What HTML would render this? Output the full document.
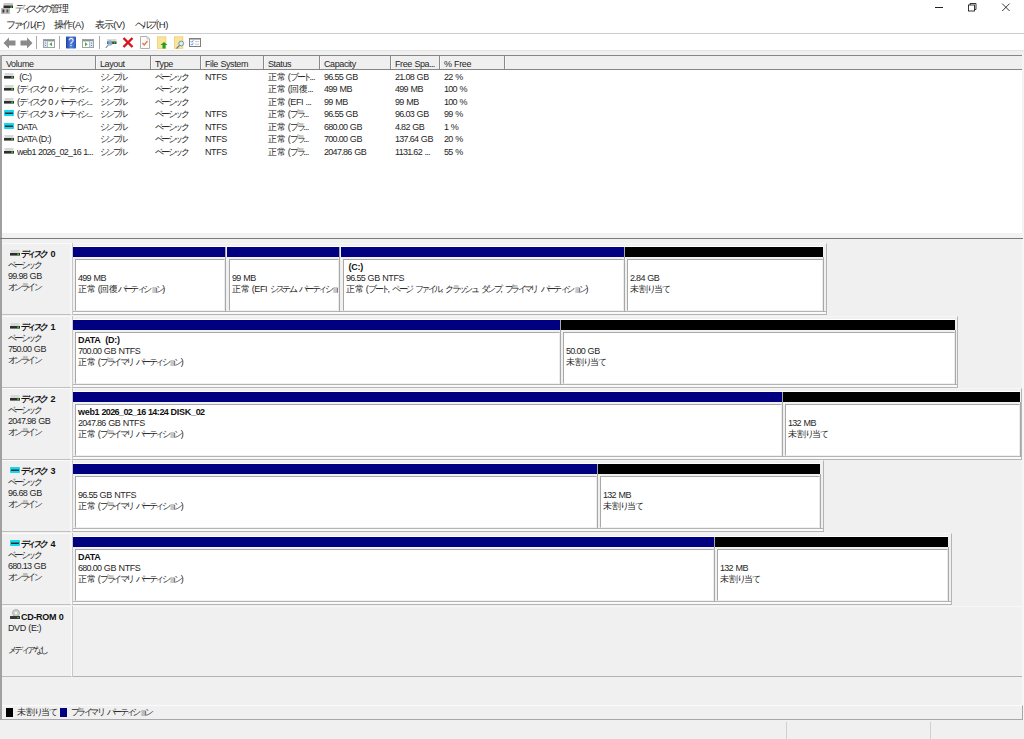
<!DOCTYPE html><html><head><meta charset="utf-8"><style>
*{margin:0;padding:0;box-sizing:border-box}
html,body{width:1024px;height:739px;overflow:hidden;background:#fff;font-family:"Liberation Sans", sans-serif;color:#000}
.a{position:absolute}
.tx{position:absolute;font-size:9px;line-height:11px;white-space:pre;letter-spacing:-0.4px;word-spacing:0.4px;color:#262626}
.b{font-weight:bold;letter-spacing:-0.3px;color:#111}
.j{letter-spacing:-2.6px}
.jl{letter-spacing:-1.4px}
.jl3{letter-spacing:-2px}
.d{letter-spacing:-0.7px}
.k{letter-spacing:-0.4px}
.j3{letter-spacing:-3.3px;margin-right:1px}
.k3{letter-spacing:-0.9px}
</style></head><body><div class="a" style="left:0;top:0;width:1024px;height:34px;background:#fff"></div>
<svg class="a" style="left:0;top:2px" width="14" height="13" viewBox="0 0 14 13">
<rect x="3.5" y="1" width="9.5" height="2.5" fill="#c8c8c8"/><rect x="3.5" y="3.5" width="9.5" height="2.5" fill="#2a2a2a"/><rect x="10.5" y="3.5" width="1.5" height="2.5" fill="#2fa52f"/>
<rect x="1" y="6" width="9" height="6" fill="#bdbdbd"/><rect x="2.5" y="7.5" width="1.8" height="3" fill="#333"/><rect x="6.5" y="7.5" width="1.8" height="3" fill="#555"/></svg>
<div class="tx" style="left:15px;top:3px;font-size:9.5px;line-height:12px"><span class="j3">ディスクの</span><span class="k3">管理</span></div>
<div class="a" style="left:935px;top:7px;width:8px;height:1px;background:#222"></div>
<svg class="a" style="left:967px;top:3px" width="10" height="9" viewBox="0 0 10 9"><rect x="1.5" y="2" width="6" height="6" fill="none" stroke="#222" stroke-width="0.9"/><path d="M3 2V0.5H9V6.5H7.5" fill="none" stroke="#222" stroke-width="0.9"/></svg>
<svg class="a" style="left:1001px;top:3px" width="10" height="9" viewBox="0 0 10 9"><path d="M1.2 0.6L8.6 8M8.6 0.6L1.2 8" stroke="#222" stroke-width="0.9"/></svg>
<div class="tx" style="left:6px;top:19px;font-size:9.5px"><span class="j3">ファイル</span>(F)</div>
<div class="tx" style="left:54px;top:19px;font-size:9.5px"><span class="k3">操作</span>(A)</div>
<div class="tx" style="left:95px;top:19px;font-size:9.5px"><span class="k3">表示</span>(V)</div>
<div class="tx" style="left:135px;top:19px;font-size:9.5px"><span class="j3">ヘルプ</span>(H)</div>
<div class="a" style="left:0;top:33px;width:1024px;height:1px;background:#cdcdcd"></div>
<svg class="a" style="left:3px;top:37px" width="30" height="12" viewBox="0 0 30 12"><path d="M0.5 6L6 0.5V3.5H12.5V8.5H6V11.5Z" fill="#8a8a8a"/><path d="M29.5 6L24 0.5V3.5H17.5V8.5H24V11.5Z" fill="#8a8a8a"/></svg>
<div class="a" style="left:36px;top:36px;width:1px;height:13px;background:#a8a8a8"></div>
<div class="a" style="left:59px;top:36px;width:1px;height:13px;background:#a8a8a8"></div>
<div class="a" style="left:99px;top:36px;width:1px;height:13px;background:#a8a8a8"></div>
<svg class="a" style="left:43px;top:39px" width="12" height="9" viewBox="0 0 12 9"><rect x="0.5" y="0.5" width="11" height="8" fill="#fff" stroke="#9ea3aa"/><rect x="1" y="1" width="10" height="1.4" fill="#8d939b"/><rect x="1" y="2.4" width="3" height="5.6" fill="#dfe5ec"/><rect x="4" y="2.4" width="0.8" height="5.6" fill="#a9aeb5"/><circle cx="2.5" cy="4" r="0.6" fill="#3b7fd8"/><circle cx="2.5" cy="6.5" r="0.6" fill="#3b7fd8"/><path d="M9 3.2L6.3 5.2L9 7.2Z" fill="#2fb82f"/></svg>
<svg class="a" style="left:66px;top:36px" width="10" height="13" viewBox="0 0 10 13"><defs><linearGradient id="hg" x1="0" x2="1" y1="0" y2="0"><stop offset="0" stop-color="#1d3f9a"/><stop offset="0.5" stop-color="#5a87e0"/><stop offset="1" stop-color="#2a52b5"/></linearGradient></defs><rect x="0" y="0.5" width="10" height="12" rx="0.8" fill="url(#hg)"/><text x="5" y="10" font-size="10" font-family="Liberation Sans" fill="#fff" text-anchor="middle">?</text></svg>
<svg class="a" style="left:82px;top:39px" width="12" height="9" viewBox="0 0 12 9"><rect x="0.5" y="0.5" width="11" height="8" fill="#fff" stroke="#9ea3aa"/><rect x="1" y="1" width="10" height="1.4" fill="#8d939b"/><rect x="8" y="2.4" width="3" height="5.6" fill="#dfe5ec"/><rect x="7.2" y="2.4" width="0.8" height="5.6" fill="#a9aeb5"/><circle cx="9.5" cy="4" r="0.6" fill="#3b7fd8"/><circle cx="9.5" cy="6.5" r="0.6" fill="#3b7fd8"/><path d="M3 3.2L5.7 5.2L3 7.2Z" fill="#2fb82f"/></svg>
<svg class="a" style="left:105px;top:38px" width="12" height="11" viewBox="0 0 12 11"><rect x="2" y="1" width="9.5" height="2.5" fill="#d8dadc"/><rect x="2" y="3.5" width="9.5" height="2.5" fill="#333"/><rect x="8.8" y="3.7" width="1.6" height="2" fill="#30c030"/><circle cx="5" cy="5" r="2.3" fill="#9cc3e0" fill-opacity="0.8" stroke="#6e95b5" stroke-width="0.6"/><path d="M3.4 6.8L0.8 9.8" stroke="#7890a5" stroke-width="1.1"/></svg>
<svg class="a" style="left:122px;top:37px" width="12" height="11" viewBox="0 0 12 11"><path d="M1.5 1L10.5 10M10.5 1L1.5 10" stroke="#d6121b" stroke-width="2.4"/></svg>
<svg class="a" style="left:140px;top:36px" width="10" height="13" viewBox="0 0 10 13"><path d="M0.5 0.5H7L9.5 3V12.5H0.5Z" fill="#fbfbfb" stroke="#b0b0b0"/><path d="M7 0.5V3H9.5" fill="none" stroke="#b0b0b0" stroke-width="0.6"/><path d="M2.5 7L4.2 9L7.5 5" stroke="#e8703a" stroke-width="1.2" fill="none"/></svg>
<svg class="a" style="left:157px;top:36px" width="11" height="13" viewBox="0 0 11 13"><rect x="0.3" y="0.8" width="8.6" height="11.6" fill="#fae39a" stroke="#eccb62" stroke-width="0.7"/><path d="M7 6L10.5 9H8.5V12.5H5.5V9H3.5Z" fill="#20a020"/></svg>
<svg class="a" style="left:174px;top:36px" width="11" height="13" viewBox="0 0 11 13"><rect x="0.3" y="0.8" width="8.6" height="11.6" fill="#fae39a" stroke="#eccb62" stroke-width="0.7"/><circle cx="7.2" cy="7.5" r="2.4" fill="#d8eef8" stroke="#5f7f95" stroke-width="0.8"/><path d="M5.5 9.3L2.5 12.5" stroke="#5f7f95" stroke-width="1.2"/></svg>
<svg class="a" style="left:189px;top:38px" width="12" height="9" viewBox="0 0 12 9"><rect x="0.5" y="0.5" width="11" height="8" fill="#fcfcfc" stroke="#808080"/><rect x="1" y="1" width="10" height="0.8" fill="#a8a8a8"/><path d="M1.8 3.3L2.8 4.3L4.3 2.4M1.8 6.1L2.8 7.1L4.3 5.2" stroke="#3d86e0" stroke-width="0.9" fill="none"/><path d="M6 3.6H10M6 6.3H10" stroke="#b5b5b5" stroke-width="0.7"/></svg>
<div class="a" style="left:0;top:50px;width:1024px;height:5px;background:#f0f0f0;border-top:1px solid #e4e4e4"></div>
<div class="a" style="left:0;top:55px;width:1024px;height:184px;background:#fff"></div>
<div class="a" style="left:0;top:55px;width:2px;height:184px;background:#a0a0a0"></div>
<div class="a" style="left:1022px;top:55px;width:2px;height:184px;background:#f4f4f4"></div>
<div class="a" style="left:2px;top:55px;width:1020px;height:15px;background:#efefef;border-top:1px solid #858585;border-bottom:1px solid #858585"></div>
<div class="a" style="left:95px;top:56px;width:1px;height:13px;background:#8a8a8a"></div>
<div class="a" style="left:96px;top:57px;width:1px;height:12px;background:#f8f8f8"></div>
<div class="a" style="left:150px;top:56px;width:1px;height:13px;background:#8a8a8a"></div>
<div class="a" style="left:151px;top:57px;width:1px;height:12px;background:#f8f8f8"></div>
<div class="a" style="left:200px;top:56px;width:1px;height:13px;background:#8a8a8a"></div>
<div class="a" style="left:201px;top:57px;width:1px;height:12px;background:#f8f8f8"></div>
<div class="a" style="left:263px;top:56px;width:1px;height:13px;background:#8a8a8a"></div>
<div class="a" style="left:264px;top:57px;width:1px;height:12px;background:#f8f8f8"></div>
<div class="a" style="left:319px;top:56px;width:1px;height:13px;background:#8a8a8a"></div>
<div class="a" style="left:320px;top:57px;width:1px;height:12px;background:#f8f8f8"></div>
<div class="a" style="left:390px;top:56px;width:1px;height:13px;background:#8a8a8a"></div>
<div class="a" style="left:391px;top:57px;width:1px;height:12px;background:#f8f8f8"></div>
<div class="a" style="left:439px;top:56px;width:1px;height:13px;background:#8a8a8a"></div>
<div class="a" style="left:440px;top:57px;width:1px;height:12px;background:#f8f8f8"></div>
<div class="a" style="left:504px;top:56px;width:1px;height:13px;background:#8a8a8a"></div>
<div class="a" style="left:505px;top:57px;width:1px;height:12px;background:#f8f8f8"></div>
<div class="tx" style="left:6px;top:59px;">Volume</div>
<div class="tx" style="left:100px;top:59px;">Layout</div>
<div class="tx" style="left:155px;top:59px;">Type</div>
<div class="tx" style="left:205px;top:59px;">File System</div>
<div class="tx" style="left:268px;top:59px;">Status</div>
<div class="tx" style="left:324px;top:59px;">Capacity</div>
<div class="tx" style="left:395px;top:59px;">Free Spa<span class="d">...</span></div>
<div class="tx" style="left:444px;top:59px;">% Free</div>
<svg class="a" style="left:4px;top:73px" width="10" height="6" viewBox="0 0 10 6"><rect x="0.5" y="0" width="9" height="3" fill="#d6d8da"/><rect x="0" y="3" width="10" height="2.6" fill="#2e2e2e"/><rect x="7.3" y="3.3" width="1.6" height="2" fill="#3cc03c"/></svg>
<div class="a" style="left:17px;top:72.0px;width:78px;height:12px;overflow:hidden"><div class="tx" style="left:0;top:0;letter-spacing:-0.7px"> (C:)</div></div>
<div class="tx" style="left:100px;top:72.0px;"><span class="j">シンプル</span></div>
<div class="tx" style="left:155px;top:72.0px;"><span class="j">ベーシック</span></div>
<div class="tx" style="left:205px;top:72.0px;">NTFS</div>
<div class="tx" style="left:268px;top:72.0px;"><span class="k">正常</span> (<span class="j">ブート</span><span class="d">...</span></div>
<div class="tx" style="left:324px;top:72.0px;"><span class="d">96.55</span> GB</div>
<div class="tx" style="left:395px;top:72.0px;"><span class="d">21.08</span> GB</div>
<div class="tx" style="left:444px;top:72.0px;"><span class="d">22</span> %</div>
<svg class="a" style="left:4px;top:85px" width="10" height="6" viewBox="0 0 10 6"><rect x="0.5" y="0" width="9" height="3" fill="#d6d8da"/><rect x="0" y="3" width="10" height="2.6" fill="#2e2e2e"/><rect x="7.3" y="3.3" width="1.6" height="2" fill="#3cc03c"/></svg>
<div class="a" style="left:17px;top:84.4px;width:78px;height:12px;overflow:hidden"><div class="tx" style="left:0;top:0;letter-spacing:-0.7px">(<span class="j">ディス</span><span class="jl">ク</span> <span class="d">0</span> <span class="j">パーティシ</span><span class="d">...</span></div></div>
<div class="tx" style="left:100px;top:84.4px;"><span class="j">シンプル</span></div>
<div class="tx" style="left:155px;top:84.4px;"><span class="j">ベーシック</span></div>
<div class="tx" style="left:205px;top:84.4px;"></div>
<div class="tx" style="left:268px;top:84.4px;"><span class="k">正常</span> (<span class="k">回復</span><span class="d">...</span></div>
<div class="tx" style="left:324px;top:84.4px;"><span class="d">499</span> MB</div>
<div class="tx" style="left:395px;top:84.4px;"><span class="d">499</span> MB</div>
<div class="tx" style="left:444px;top:84.4px;"><span class="d">100</span> %</div>
<svg class="a" style="left:4px;top:98px" width="10" height="6" viewBox="0 0 10 6"><rect x="0.5" y="0" width="9" height="3" fill="#d6d8da"/><rect x="0" y="3" width="10" height="2.6" fill="#2e2e2e"/><rect x="7.3" y="3.3" width="1.6" height="2" fill="#3cc03c"/></svg>
<div class="a" style="left:17px;top:96.9px;width:78px;height:12px;overflow:hidden"><div class="tx" style="left:0;top:0;letter-spacing:-0.7px">(<span class="j">ディス</span><span class="jl">ク</span> <span class="d">0</span> <span class="j">パーティシ</span><span class="d">...</span></div></div>
<div class="tx" style="left:100px;top:96.9px;"><span class="j">シンプル</span></div>
<div class="tx" style="left:155px;top:96.9px;"><span class="j">ベーシック</span></div>
<div class="tx" style="left:205px;top:96.9px;"></div>
<div class="tx" style="left:268px;top:96.9px;"><span class="k">正常</span> (EFI <span class="d">...</span></div>
<div class="tx" style="left:324px;top:96.9px;"><span class="d">99</span> MB</div>
<div class="tx" style="left:395px;top:96.9px;"><span class="d">99</span> MB</div>
<div class="tx" style="left:444px;top:96.9px;"><span class="d">100</span> %</div>
<svg class="a" style="left:4px;top:110px" width="10" height="6" viewBox="0 0 10 6"><rect x="0" y="0" width="10" height="6" rx="0.8" fill="#12d8f0"/><rect x="1" y="2.5" width="8" height="1.5" fill="#3a2a2a"/></svg>
<div class="a" style="left:17px;top:109.3px;width:78px;height:12px;overflow:hidden"><div class="tx" style="left:0;top:0;letter-spacing:-0.7px">(<span class="j">ディス</span><span class="jl">ク</span> <span class="d">3</span> <span class="j">パーティシ</span><span class="d">...</span></div></div>
<div class="tx" style="left:100px;top:109.3px;"><span class="j">シンプル</span></div>
<div class="tx" style="left:155px;top:109.3px;"><span class="j">ベーシック</span></div>
<div class="tx" style="left:205px;top:109.3px;">NTFS</div>
<div class="tx" style="left:268px;top:109.3px;"><span class="k">正常</span> (<span class="j">プラ</span><span class="d">...</span></div>
<div class="tx" style="left:324px;top:109.3px;"><span class="d">96.55</span> GB</div>
<div class="tx" style="left:395px;top:109.3px;"><span class="d">96.03</span> GB</div>
<div class="tx" style="left:444px;top:109.3px;"><span class="d">99</span> %</div>
<svg class="a" style="left:4px;top:123px" width="10" height="6" viewBox="0 0 10 6"><rect x="0" y="0" width="10" height="6" rx="0.8" fill="#12d8f0"/><rect x="1" y="2.5" width="8" height="1.5" fill="#3a2a2a"/></svg>
<div class="a" style="left:17px;top:121.7px;width:78px;height:12px;overflow:hidden"><div class="tx" style="left:0;top:0;letter-spacing:-0.7px">DATA</div></div>
<div class="tx" style="left:100px;top:121.7px;"><span class="j">シンプル</span></div>
<div class="tx" style="left:155px;top:121.7px;"><span class="j">ベーシック</span></div>
<div class="tx" style="left:205px;top:121.7px;">NTFS</div>
<div class="tx" style="left:268px;top:121.7px;"><span class="k">正常</span> (<span class="j">プラ</span><span class="d">...</span></div>
<div class="tx" style="left:324px;top:121.7px;"><span class="d">680.00</span> GB</div>
<div class="tx" style="left:395px;top:121.7px;"><span class="d">4.82</span> GB</div>
<div class="tx" style="left:444px;top:121.7px;"><span class="d">1</span> %</div>
<svg class="a" style="left:4px;top:135px" width="10" height="6" viewBox="0 0 10 6"><rect x="0.5" y="0" width="9" height="3" fill="#d6d8da"/><rect x="0" y="3" width="10" height="2.6" fill="#2e2e2e"/><rect x="7.3" y="3.3" width="1.6" height="2" fill="#3cc03c"/></svg>
<div class="a" style="left:17px;top:134.2px;width:78px;height:12px;overflow:hidden"><div class="tx" style="left:0;top:0;letter-spacing:-0.7px">DATA (D:)</div></div>
<div class="tx" style="left:100px;top:134.2px;"><span class="j">シンプル</span></div>
<div class="tx" style="left:155px;top:134.2px;"><span class="j">ベーシック</span></div>
<div class="tx" style="left:205px;top:134.2px;">NTFS</div>
<div class="tx" style="left:268px;top:134.2px;"><span class="k">正常</span> (<span class="j">プラ</span><span class="d">...</span></div>
<div class="tx" style="left:324px;top:134.2px;"><span class="d">700.00</span> GB</div>
<div class="tx" style="left:395px;top:134.2px;"><span class="d">137.64</span> GB</div>
<div class="tx" style="left:444px;top:134.2px;"><span class="d">20</span> %</div>
<svg class="a" style="left:4px;top:148px" width="10" height="6" viewBox="0 0 10 6"><rect x="0.5" y="0" width="9" height="3" fill="#d6d8da"/><rect x="0" y="3" width="10" height="2.6" fill="#2e2e2e"/><rect x="7.3" y="3.3" width="1.6" height="2" fill="#3cc03c"/></svg>
<div class="a" style="left:17px;top:146.6px;width:78px;height:12px;overflow:hidden"><div class="tx" style="left:0;top:0;letter-spacing:-0.7px">web<span class="d">1</span> <span class="d">2026</span>_<span class="d">02</span>_<span class="d">16</span> <span class="d">1...</span></div></div>
<div class="tx" style="left:100px;top:146.6px;"><span class="j">シンプル</span></div>
<div class="tx" style="left:155px;top:146.6px;"><span class="j">ベーシック</span></div>
<div class="tx" style="left:205px;top:146.6px;">NTFS</div>
<div class="tx" style="left:268px;top:146.6px;"><span class="k">正常</span> (<span class="j">プラ</span><span class="d">...</span></div>
<div class="tx" style="left:324px;top:146.6px;"><span class="d">2047.86</span> GB</div>
<div class="tx" style="left:395px;top:146.6px;"><span class="d">1131.62</span> <span class="d">...</span></div>
<div class="tx" style="left:444px;top:146.6px;"><span class="d">55</span> %</div>
<div class="a" style="left:2px;top:233px;width:1020px;height:5px;background:#f2f2f2"></div>
<div class="a" style="left:0;top:238px;width:1023px;height:1px;background:#7a7a7a"></div>
<div class="a" style="left:0;top:239px;width:1024px;height:500px;background:#f0f0f0"></div>
<div class="a" style="left:0;top:239px;width:2px;height:481px;background:#a0a0a0"></div>
<div class="a" style="left:1022px;top:239px;width:2px;height:481px;background:#f6f6f6"></div>
<div class="a" style="left:2px;top:243px;width:70px;height:72px;background:#f0f0f0;border-top:1px solid #fafafa;border-right:2px solid #f8f8f8;border-bottom:1px solid #c0c0c0"></div>
<div class="a" style="left:72px;top:243px;width:1px;height:72px;background:#c8c8c8"></div>
<svg class="a" style="left:10px;top:250px" width="10" height="6" viewBox="0 0 10 6"><rect x="0.5" y="0" width="9" height="3" fill="#d6d8da"/><rect x="0" y="3" width="10" height="2.6" fill="#2e2e2e"/><rect x="7.3" y="3.3" width="1.6" height="2" fill="#3cc03c"/></svg>
<div class="tx b" style="left:21px;top:249px;"><span class="j">ディス</span><span class="jl">ク</span> <span class="d">0</span></div>
<div class="tx" style="left:8px;top:260px;"><span class="j">ベーシック</span></div>
<div class="tx" style="left:8px;top:271px;"><span class="d">99.98</span> GB</div>
<div class="tx" style="left:8px;top:282px;"><span class="j">オンライン</span></div>
<div class="a" style="left:73px;top:243px;width:754px;height:72px;background:#f0f0f0;border-top:1px solid #f6f6f6;border-right:1px solid #b4b4b4;border-bottom:1px solid #b4b4b4"></div>
<div class="a" style="left:73px;top:246px;width:750px;height:1px;background:#fff"></div>
<div class="a" style="left:73px;top:311px;width:753px;height:1px;background:#b4b4b4"></div>
<div class="a" style="left:73px;top:312px;width:753px;height:2px;background:#fafafa"></div>
<div class="a" style="left:73px;top:247px;width:152px;height:10px;background:#000080"></div>
<div class="a" style="left:75px;top:259px;width:150px;height:52px;background:#fff;border-top:1px solid #a8a8a8;border-left:1px solid #a8a8a8;border-right:1px solid #ececec;border-bottom:1px solid #f0f0f0"></div>
<div class="a" style="left:76px;top:260px;width:148px;height:50px;overflow:hidden"><div class="tx b" style="left:2px;top:2px"></div><div class="tx" style="left:2px;top:13px"><span class="d">499</span> MB</div><div class="tx" style="left:2px;top:24px"><span class="k">正常</span> (<span class="k">回復</span><span class="j">パーティション</span>)</div></div>
<div class="a" style="left:225px;top:257px;width:1px;height:55px;background:#a8a8a8"></div>
<div class="a" style="left:227px;top:247px;width:112px;height:10px;background:#000080"></div>
<div class="a" style="left:229px;top:259px;width:110px;height:52px;background:#fff;border-top:1px solid #a8a8a8;border-left:1px solid #a8a8a8;border-right:1px solid #ececec;border-bottom:1px solid #f0f0f0"></div>
<div class="a" style="left:230px;top:260px;width:108px;height:50px;overflow:hidden"><div class="tx b" style="left:2px;top:2px"></div><div class="tx" style="left:2px;top:13px"><span class="d">99</span> MB</div><div class="tx" style="left:2px;top:24px"><span class="k">正常</span> (EFI <span class="j">システ</span><span class="jl">ム</span> <span class="j">パーティショ</span></div></div>
<div class="a" style="left:339px;top:257px;width:1px;height:55px;background:#a8a8a8"></div>
<div class="a" style="left:341px;top:247px;width:283px;height:10px;background:#000080"></div>
<div class="a" style="left:343px;top:259px;width:281px;height:52px;background:#fff;border-top:1px solid #a8a8a8;border-left:1px solid #a8a8a8;border-right:1px solid #ececec;border-bottom:1px solid #f0f0f0"></div>
<div class="a" style="left:344px;top:260px;width:279px;height:50px;overflow:hidden"><div class="tx b" style="left:2px;top:2px"> (C:)</div><div class="tx" style="left:2px;top:13px"><span class="d">96.55</span> GB NTFS</div><div class="tx" style="left:2px;top:24px"><span class="k">正常</span> (<span class="j">ブート</span>, <span class="j">ペー</span><span class="jl">ジ</span> <span class="j">ファイル</span>, <span class="j">クラッシ</span><span class="jl">ュ</span> <span class="j">ダンプ</span>, <span class="j">プライマ</span><span class="jl">リ</span> <span class="j">パーティション</span>)</div></div>
<div class="a" style="left:624px;top:257px;width:1px;height:55px;background:#a8a8a8"></div>
<div class="a" style="left:625px;top:247px;width:198px;height:10px;background:#000000"></div>
<div class="a" style="left:627px;top:259px;width:196px;height:52px;background:#fff;border-top:1px solid #a8a8a8;border-left:1px solid #a8a8a8;border-right:1px solid #ececec;border-bottom:1px solid #f0f0f0"></div>
<div class="a" style="left:628px;top:260px;width:194px;height:50px;overflow:hidden"><div class="tx b" style="left:2px;top:2px"></div><div class="tx" style="left:2px;top:13px"><span class="d">2.84</span> GB</div><div class="tx" style="left:2px;top:24px"><span class="k">未割</span><span class="j">り</span><span class="k">当</span><span class="j">て</span></div></div>
<div class="a" style="left:823px;top:257px;width:1px;height:55px;background:#a8a8a8"></div>
<div class="a" style="left:225px;top:247px;width:1px;height:10px;background:#a8a8a8"></div>
<div class="a" style="left:339px;top:247px;width:1px;height:10px;background:#a8a8a8"></div>
<div class="a" style="left:624px;top:247px;width:1px;height:10px;background:#a8a8a8"></div>
<div class="a" style="left:2px;top:316px;width:70px;height:72px;background:#f0f0f0;border-top:1px solid #fafafa;border-right:2px solid #f8f8f8;border-bottom:1px solid #c0c0c0"></div>
<div class="a" style="left:72px;top:316px;width:1px;height:72px;background:#c8c8c8"></div>
<svg class="a" style="left:10px;top:323px" width="10" height="6" viewBox="0 0 10 6"><rect x="0.5" y="0" width="9" height="3" fill="#d6d8da"/><rect x="0" y="3" width="10" height="2.6" fill="#2e2e2e"/><rect x="7.3" y="3.3" width="1.6" height="2" fill="#3cc03c"/></svg>
<div class="tx b" style="left:21px;top:322px;"><span class="j">ディス</span><span class="jl">ク</span> <span class="d">1</span></div>
<div class="tx" style="left:8px;top:333px;"><span class="j">ベーシック</span></div>
<div class="tx" style="left:8px;top:344px;"><span class="d">750.00</span> GB</div>
<div class="tx" style="left:8px;top:355px;"><span class="j">オンライン</span></div>
<div class="a" style="left:73px;top:316px;width:885px;height:72px;background:#f0f0f0;border-top:1px solid #f6f6f6;border-right:1px solid #b4b4b4;border-bottom:1px solid #b4b4b4"></div>
<div class="a" style="left:73px;top:319px;width:882px;height:1px;background:#fff"></div>
<div class="a" style="left:73px;top:384px;width:884px;height:1px;background:#b4b4b4"></div>
<div class="a" style="left:73px;top:385px;width:884px;height:2px;background:#fafafa"></div>
<div class="a" style="left:73px;top:320px;width:487px;height:10px;background:#000080"></div>
<div class="a" style="left:75px;top:332px;width:485px;height:52px;background:#fff;border-top:1px solid #a8a8a8;border-left:1px solid #a8a8a8;border-right:1px solid #ececec;border-bottom:1px solid #f0f0f0"></div>
<div class="a" style="left:76px;top:333px;width:483px;height:50px;overflow:hidden"><div class="tx b" style="left:2px;top:2px">DATA  (D:)</div><div class="tx" style="left:2px;top:13px"><span class="d">700.00</span> GB NTFS</div><div class="tx" style="left:2px;top:24px"><span class="k">正常</span> (<span class="j">プライマ</span><span class="jl">リ</span> <span class="j">パーティション</span>)</div></div>
<div class="a" style="left:560px;top:330px;width:1px;height:55px;background:#a8a8a8"></div>
<div class="a" style="left:561px;top:320px;width:394px;height:10px;background:#000000"></div>
<div class="a" style="left:563px;top:332px;width:392px;height:52px;background:#fff;border-top:1px solid #a8a8a8;border-left:1px solid #a8a8a8;border-right:1px solid #ececec;border-bottom:1px solid #f0f0f0"></div>
<div class="a" style="left:564px;top:333px;width:390px;height:50px;overflow:hidden"><div class="tx b" style="left:2px;top:2px"></div><div class="tx" style="left:2px;top:13px"><span class="d">50.00</span> GB</div><div class="tx" style="left:2px;top:24px"><span class="k">未割</span><span class="j">り</span><span class="k">当</span><span class="j">て</span></div></div>
<div class="a" style="left:955px;top:330px;width:1px;height:55px;background:#a8a8a8"></div>
<div class="a" style="left:560px;top:320px;width:1px;height:10px;background:#a8a8a8"></div>
<div class="a" style="left:2px;top:388px;width:70px;height:72px;background:#f0f0f0;border-top:1px solid #fafafa;border-right:2px solid #f8f8f8;border-bottom:1px solid #c0c0c0"></div>
<div class="a" style="left:72px;top:388px;width:1px;height:72px;background:#c8c8c8"></div>
<svg class="a" style="left:10px;top:395px" width="10" height="6" viewBox="0 0 10 6"><rect x="0.5" y="0" width="9" height="3" fill="#d6d8da"/><rect x="0" y="3" width="10" height="2.6" fill="#2e2e2e"/><rect x="7.3" y="3.3" width="1.6" height="2" fill="#3cc03c"/></svg>
<div class="tx b" style="left:21px;top:394px;"><span class="j">ディス</span><span class="jl">ク</span> <span class="d">2</span></div>
<div class="tx" style="left:8px;top:405px;"><span class="j">ベーシック</span></div>
<div class="tx" style="left:8px;top:416px;"><span class="d">2047.98</span> GB</div>
<div class="tx" style="left:8px;top:427px;"><span class="j">オンライン</span></div>
<div class="a" style="left:73px;top:388px;width:949px;height:72px;background:#f0f0f0;border-top:1px solid #f6f6f6;border-right:1px solid #b4b4b4;border-bottom:1px solid #b4b4b4"></div>
<div class="a" style="left:73px;top:391px;width:947px;height:1px;background:#fff"></div>
<div class="a" style="left:73px;top:456px;width:948px;height:1px;background:#b4b4b4"></div>
<div class="a" style="left:73px;top:457px;width:948px;height:2px;background:#fafafa"></div>
<div class="a" style="left:73px;top:392px;width:709px;height:10px;background:#000080"></div>
<div class="a" style="left:75px;top:404px;width:707px;height:52px;background:#fff;border-top:1px solid #a8a8a8;border-left:1px solid #a8a8a8;border-right:1px solid #ececec;border-bottom:1px solid #f0f0f0"></div>
<div class="a" style="left:76px;top:405px;width:705px;height:50px;overflow:hidden"><div class="tx b" style="left:2px;top:2px">web<span class="d">1</span> <span class="d">2026</span>_<span class="d">02</span>_<span class="d">16</span> <span class="d">14</span>:<span class="d">24</span> DISK_<span class="d">02</span></div><div class="tx" style="left:2px;top:13px"><span class="d">2047.86</span> GB NTFS</div><div class="tx" style="left:2px;top:24px"><span class="k">正常</span> (<span class="j">プライマ</span><span class="jl">リ</span> <span class="j">パーティション</span>)</div></div>
<div class="a" style="left:782px;top:402px;width:1px;height:55px;background:#a8a8a8"></div>
<div class="a" style="left:783px;top:392px;width:237px;height:10px;background:#000000"></div>
<div class="a" style="left:785px;top:404px;width:235px;height:52px;background:#fff;border-top:1px solid #a8a8a8;border-left:1px solid #a8a8a8;border-right:1px solid #ececec;border-bottom:1px solid #f0f0f0"></div>
<div class="a" style="left:786px;top:405px;width:233px;height:50px;overflow:hidden"><div class="tx b" style="left:2px;top:2px"></div><div class="tx" style="left:2px;top:13px"><span class="d">132</span> MB</div><div class="tx" style="left:2px;top:24px"><span class="k">未割</span><span class="j">り</span><span class="k">当</span><span class="j">て</span></div></div>
<div class="a" style="left:1020px;top:402px;width:1px;height:55px;background:#a8a8a8"></div>
<div class="a" style="left:782px;top:392px;width:1px;height:10px;background:#a8a8a8"></div>
<div class="a" style="left:2px;top:460px;width:70px;height:72px;background:#f0f0f0;border-top:1px solid #fafafa;border-right:2px solid #f8f8f8;border-bottom:1px solid #c0c0c0"></div>
<div class="a" style="left:72px;top:460px;width:1px;height:72px;background:#c8c8c8"></div>
<svg class="a" style="left:10px;top:467px" width="10" height="6" viewBox="0 0 10 6"><rect x="0" y="0" width="10" height="6" rx="0.8" fill="#12d8f0"/><rect x="1" y="2.5" width="8" height="1.5" fill="#3a2a2a"/></svg>
<div class="tx b" style="left:21px;top:466px;"><span class="j">ディス</span><span class="jl">ク</span> <span class="d">3</span></div>
<div class="tx" style="left:8px;top:477px;"><span class="j">ベーシック</span></div>
<div class="tx" style="left:8px;top:488px;"><span class="d">96.68</span> GB</div>
<div class="tx" style="left:8px;top:499px;"><span class="j">オンライン</span></div>
<div class="a" style="left:73px;top:460px;width:751px;height:72px;background:#f0f0f0;border-top:1px solid #f6f6f6;border-right:1px solid #b4b4b4;border-bottom:1px solid #b4b4b4"></div>
<div class="a" style="left:73px;top:463px;width:747px;height:1px;background:#fff"></div>
<div class="a" style="left:73px;top:528px;width:750px;height:1px;background:#b4b4b4"></div>
<div class="a" style="left:73px;top:529px;width:750px;height:2px;background:#fafafa"></div>
<div class="a" style="left:73px;top:464px;width:524px;height:10px;background:#000080"></div>
<div class="a" style="left:75px;top:476px;width:522px;height:52px;background:#fff;border-top:1px solid #a8a8a8;border-left:1px solid #a8a8a8;border-right:1px solid #ececec;border-bottom:1px solid #f0f0f0"></div>
<div class="a" style="left:76px;top:477px;width:520px;height:50px;overflow:hidden"><div class="tx b" style="left:2px;top:2px"></div><div class="tx" style="left:2px;top:13px"><span class="d">96.55</span> GB NTFS</div><div class="tx" style="left:2px;top:24px"><span class="k">正常</span> (<span class="j">プライマ</span><span class="jl">リ</span> <span class="j">パーティション</span>)</div></div>
<div class="a" style="left:597px;top:474px;width:1px;height:55px;background:#a8a8a8"></div>
<div class="a" style="left:598px;top:464px;width:222px;height:10px;background:#000000"></div>
<div class="a" style="left:600px;top:476px;width:220px;height:52px;background:#fff;border-top:1px solid #a8a8a8;border-left:1px solid #a8a8a8;border-right:1px solid #ececec;border-bottom:1px solid #f0f0f0"></div>
<div class="a" style="left:601px;top:477px;width:218px;height:50px;overflow:hidden"><div class="tx b" style="left:2px;top:2px"></div><div class="tx" style="left:2px;top:13px"><span class="d">132</span> MB</div><div class="tx" style="left:2px;top:24px"><span class="k">未割</span><span class="j">り</span><span class="k">当</span><span class="j">て</span></div></div>
<div class="a" style="left:820px;top:474px;width:1px;height:55px;background:#a8a8a8"></div>
<div class="a" style="left:597px;top:464px;width:1px;height:10px;background:#a8a8a8"></div>
<div class="a" style="left:2px;top:533px;width:70px;height:72px;background:#f0f0f0;border-top:1px solid #fafafa;border-right:2px solid #f8f8f8;border-bottom:1px solid #c0c0c0"></div>
<div class="a" style="left:72px;top:533px;width:1px;height:72px;background:#c8c8c8"></div>
<svg class="a" style="left:10px;top:540px" width="10" height="6" viewBox="0 0 10 6"><rect x="0" y="0" width="10" height="6" rx="0.8" fill="#12d8f0"/><rect x="1" y="2.5" width="8" height="1.5" fill="#3a2a2a"/></svg>
<div class="tx b" style="left:21px;top:539px;"><span class="j">ディス</span><span class="jl">ク</span> <span class="d">4</span></div>
<div class="tx" style="left:8px;top:550px;"><span class="j">ベーシック</span></div>
<div class="tx" style="left:8px;top:561px;"><span class="d">680.13</span> GB</div>
<div class="tx" style="left:8px;top:572px;"><span class="j">オンライン</span></div>
<div class="a" style="left:73px;top:533px;width:879px;height:72px;background:#f0f0f0;border-top:1px solid #f6f6f6;border-right:1px solid #b4b4b4;border-bottom:1px solid #b4b4b4"></div>
<div class="a" style="left:73px;top:536px;width:875px;height:1px;background:#fff"></div>
<div class="a" style="left:73px;top:601px;width:878px;height:1px;background:#b4b4b4"></div>
<div class="a" style="left:73px;top:602px;width:878px;height:2px;background:#fafafa"></div>
<div class="a" style="left:73px;top:537px;width:641px;height:10px;background:#000080"></div>
<div class="a" style="left:75px;top:549px;width:639px;height:52px;background:#fff;border-top:1px solid #a8a8a8;border-left:1px solid #a8a8a8;border-right:1px solid #ececec;border-bottom:1px solid #f0f0f0"></div>
<div class="a" style="left:76px;top:550px;width:637px;height:50px;overflow:hidden"><div class="tx b" style="left:2px;top:2px">DATA</div><div class="tx" style="left:2px;top:13px"><span class="d">680.00</span> GB NTFS</div><div class="tx" style="left:2px;top:24px"><span class="k">正常</span> (<span class="j">プライマ</span><span class="jl">リ</span> <span class="j">パーティション</span>)</div></div>
<div class="a" style="left:714px;top:547px;width:1px;height:55px;background:#a8a8a8"></div>
<div class="a" style="left:715px;top:537px;width:233px;height:10px;background:#000000"></div>
<div class="a" style="left:717px;top:549px;width:231px;height:52px;background:#fff;border-top:1px solid #a8a8a8;border-left:1px solid #a8a8a8;border-right:1px solid #ececec;border-bottom:1px solid #f0f0f0"></div>
<div class="a" style="left:718px;top:550px;width:229px;height:50px;overflow:hidden"><div class="tx b" style="left:2px;top:2px"></div><div class="tx" style="left:2px;top:13px"><span class="d">132</span> MB</div><div class="tx" style="left:2px;top:24px"><span class="k">未割</span><span class="j">り</span><span class="k">当</span><span class="j">て</span></div></div>
<div class="a" style="left:948px;top:547px;width:1px;height:55px;background:#a8a8a8"></div>
<div class="a" style="left:714px;top:537px;width:1px;height:10px;background:#a8a8a8"></div>
<div class="a" style="left:2px;top:606px;width:70px;height:71px;background:#f0f0f0;border-top:1px solid #fbfbfb;border-right:1px solid #fbfbfb;border-bottom:1px solid #bcbcbc"></div>
<div class="a" style="left:72px;top:606px;width:1px;height:71px;background:#c8c8c8"></div>
<div class="a" style="left:73px;top:606px;width:949px;height:71px;border-top:1px solid #f8f8f8;border-bottom:1px solid #b4b4b4"></div>
<svg class="a" style="left:10px;top:609px" width="11" height="11" viewBox="0 0 11 11"><circle cx="6" cy="4" r="3.5" fill="#d0d0d0" stroke="#909090" stroke-width="0.6"/><circle cx="6" cy="4" r="1" fill="#fff"/><rect x="0" y="7" width="10" height="3" fill="#3a3a3a"/><rect x="7" y="8" width="2" height="1.2" fill="#30b030"/></svg>
<div class="tx b" style="left:21px;top:612px;">CD-ROM <span class="d">0</span></div>
<div class="tx" style="left:8px;top:623px;">DVD (E:)</div>
<div class="tx" style="left:8px;top:645px;"><span class="j">メディアなし</span></div>
<div class="a" style="left:2px;top:705px;width:1021px;height:15px;background:#f0f0f0;border-top:1px solid #fbfbfb;border-bottom:1px solid #a8a8a8;border-right:1px solid #a8a8a8"></div>
<div class="a" style="left:6px;top:708px;width:7px;height:9px;background:#000"></div>
<div class="tx" style="left:17px;top:707px;"><span class="k">未割</span><span class="j">り</span><span class="k">当</span><span class="j">て</span></div>
<div class="a" style="left:60px;top:708px;width:7px;height:9px;background:#000080"></div>
<div class="tx" style="left:71px;top:707px;"><span class="j">プライマ</span><span class="jl">リ</span> <span class="j">パーティション</span></div>
<div class="a" style="left:786px;top:722px;width:1px;height:17px;background:#d0d0d0"></div>
<div class="a" style="left:930px;top:722px;width:1px;height:17px;background:#d0d0d0"></div></body></html>
